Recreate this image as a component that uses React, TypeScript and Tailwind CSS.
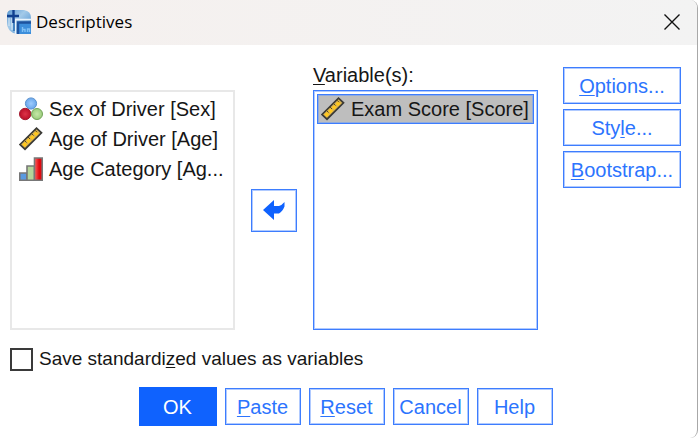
import { useState } from 'react'
import type { ReactNode } from 'react'

function LogoIcon() {
  return (
    <svg viewBox="0 0 24 24" className="size-6 shrink-0" aria-hidden="true">
      <defs>
        <linearGradient id="logo-bg" x1="0" y1="0" x2="1" y2="1">
          <stop offset="0" stopColor="#5a97d0" />
          <stop offset="0.4" stopColor="#a3cae9" />
          <stop offset="1" stopColor="#3f86cc" />
        </linearGradient>
      </defs>
      <path d="M5 0h12q7 1 7 8v16H11Q0 23 0 12V5q0-5 5-5z" fill="url(#logo-bg)" />
      <path d="M8.500 24V9.500H24" stroke="#eaf4fc" strokeWidth="1.500" fill="none" />
      <path d="M5 8v12M2 8v8" stroke="#dcebf7" strokeWidth="1" />
      <path d="M0 6h12M6.500 0v13" stroke="#10408f" strokeWidth="2.400" />
      <path d="M7 13v8" stroke="#2f74b8" strokeWidth="1.600" />
      <path d="M12 24V13h12v11z" fill="#3c8edb" />
      <path d="M11 24V12.500h13" stroke="#1d539f" strokeWidth="2.400" fill="none" />
      <path d="M15.500 17v5M15.500 19.500h2.500V22M20.500 22v-3h2v3" stroke="#7fc0f5" strokeWidth="1.400" fill="none" />
    </svg>
  )
}

function NominalIcon() {
  return (
    <svg viewBox="0 0 24 24" className="size-6 shrink-0" aria-hidden="true">
      <defs>
        <radialGradient id="ball-blue">
          <stop offset="0" stopColor="#9dccff" />
          <stop offset="1" stopColor="#6aa6ea" />
        </radialGradient>
        <radialGradient id="ball-red">
          <stop offset="0" stopColor="#dc3448" />
          <stop offset="1" stopColor="#bb0f28" />
        </radialGradient>
        <radialGradient id="ball-green">
          <stop offset="0" stopColor="#c6e8a8" />
          <stop offset="1" stopColor="#9bcc7c" />
        </radialGradient>
      </defs>
      <circle cx="12" cy="6.500" r="5.600" fill="url(#ball-blue)" stroke="#5a92cf" />
      <circle cx="6.200" cy="17" r="5.700" fill="url(#ball-red)" stroke="#a31a30" />
      <circle cx="18" cy="17" r="5.500" fill="url(#ball-green)" stroke="#74a45a" />
    </svg>
  )
}

function ScaleIcon() {
  return (
    <svg viewBox="0 0 24 24" className="size-6 shrink-0" aria-hidden="true">
      <path d="M1 17.500L17.500 1.200l5 4.600L6 22.200z" fill="#d9b252" stroke="#3a3a36" strokeWidth="1.700" />
      <path d="M4.500 18.800L19.500 4.500" stroke="#ffc81e" strokeWidth="3.400" strokeDasharray="3.600 1.600" />
      <path d="M5.500 13.500l2 2M9 10l2 2M12.500 6.500l2 2M16 3.200l2 2" stroke="#5a4a1c" strokeWidth="1" />
    </svg>
  )
}

function OrdinalIcon() {
  return (
    <svg viewBox="0 0 24 24" className="size-6 shrink-0" aria-hidden="true">
      <defs>
        <linearGradient id="bar-red">
          <stop offset="0" stopColor="#ff6464" />
          <stop offset="0.6" stopColor="#e00a10" />
        </linearGradient>
      </defs>
      <g stroke="#777" strokeWidth="1.600">
        <path d="M.8 16h7.200v7.200H.8z" fill="#5a9ae0" />
        <path d="M8 9h7.500v14.200H8z" fill="#b4d59a" />
        <path d="M15.500 1h7.700v22.200h-7.700z" fill="url(#bar-red)" />
      </g>
    </svg>
  )
}

const sourceVariables = [
  { id: 'sex', label: 'Sex of Driver [Sex]', icon: NominalIcon },
  { id: 'age', label: 'Age of Driver [Age]', icon: ScaleIcon },
  { id: 'agecat', label: 'Age Category [Ag...', icon: OrdinalIcon },
]

const selectedVariables = [{ id: 'score', label: 'Exam Score [Score]', icon: ScaleIcon }]

function Key({ children }: { children: ReactNode }) {
  return <span className="underline decoration-1 underline-offset-2">{children}</span>
}

function DialogButton({ className, children }: { className: string; children: ReactNode }) {
  return (
    <button
      type="button"
      className={`flex items-center justify-center border border-[#3d7dfe] bg-white text-[#2c74fe] inset-ring inset-ring-[#b0caff] ${className}`}
    >
      <span>{children}</span>
    </button>
  )
}

export default function App() {
  const [standardize, setStandardize] = useState(false)

  return (
    <main
      role="dialog"
      aria-labelledby="dialog-title"
      className="flex min-h-screen flex-col overflow-hidden rounded-r-lg border-r border-[#a8a8a8] bg-white font-['Liberation_Sans',Arial,sans-serif] text-[20px] leading-6 text-[#161616]"
    >
      <header className="flex h-[45px] items-center justify-between bg-linear-to-r from-[#f5f0ee] to-[#f3f3f3] pr-4 pb-[2px] pl-[7px]">
        <div className="flex items-center gap-[5px]">
          <LogoIcon />
          <h1 id="dialog-title" className="font-['Open_Sans','Noto_Sans',sans-serif] text-[17px] text-black">
            Descriptives
          </h1>
        </div>
        <button type="button" aria-label="Close">
          <svg viewBox="0 0 18 18" className="size-[18px]" aria-hidden="true">
            <path d="M1.500 1.500l15 15M16.500 1.500l-15 15" stroke="#111" strokeWidth="1.400" />
          </svg>
        </button>
      </header>

      <div className="flex flex-col pt-[18px] pr-4 pl-[10px]">
        <div className="flex">
          <div className="min-w-0 flex-1 pt-[27px]">
            <ul aria-label="Available variables" className="h-60 border-2 border-[#e8e8e8] px-[7px] py-[2px]">
              {sourceVariables.map(({ id, label, icon: Icon }) => (
                <li key={id} className="flex h-[30px] items-center gap-[6px] whitespace-nowrap">
                  <Icon />
                  {label}
                </li>
              ))}
            </ul>
          </div>

          <div className="mx-4 flex items-center pt-[27px]">
            <button
              type="button"
              aria-label="Move variable"
              className="flex h-[43px] w-[46px] items-center justify-center border border-[#3d7dfe] inset-ring inset-ring-[#b0caff]"
            >
              <svg viewBox="0 0 22 20" className="h-5 w-[22px]" aria-hidden="true">
                <path d="M0 10L11 0v6h5q3-1 5.500-4v4.500q-2 5-5.500 7h-5V20z" fill="#0f62fe" />
              </svg>
            </button>
          </div>

          <section className="min-w-0 flex-1">
            <h2 id="variables-label" className="h-[27px]">
              <Key>V</Key>ariable(s):
            </h2>
            <ul
              aria-labelledby="variables-label"
              className="h-60 border border-[#3d7dfe] p-[3px] inset-ring inset-ring-[#b0caff]"
            >
              {selectedVariables.map(({ id, label, icon: Icon }) => (
                <li
                  key={id}
                  className="flex h-[30px] items-center gap-[6px] border border-[#3d7dfe] bg-[#bebebe] px-[3px] whitespace-nowrap inset-ring inset-ring-[#8fabdf]"
                >
                  <Icon />
                  {label}
                </li>
              ))}
            </ul>
          </section>

          <div className="mt-1 ml-[25px] flex w-[118px] flex-col gap-[5px]">
            <DialogButton className="h-[37px]">
              <Key>O</Key>ptions...
            </DialogButton>
            <DialogButton className="h-[37px]">
              Sty<Key>l</Key>e...
            </DialogButton>
            <DialogButton className="h-[37px]">
              <Key>B</Key>ootstrap...
            </DialogButton>
          </div>
        </div>

        <label className="mt-[17px] flex items-center gap-[6px] self-start text-[19px]">
          <input
            type="checkbox"
            checked={standardize}
            onChange={(e) => setStandardize(e.target.checked)}
            className="size-[23px] appearance-none border-2 border-[#3a3a3a] bg-white checked:bg-[#0f62fe]"
          />
          <span>
            Save standardi<Key>z</Key>ed values as variables
          </span>
        </label>

        <footer className="mt-4 flex items-center justify-center gap-2">
          <button type="button" className="h-[39px] w-[78px] bg-[#0f62fe] text-white">
            OK
          </button>
          <DialogButton className="h-[37px] w-[76px]">
            <Key>P</Key>aste
          </DialogButton>
          <DialogButton className="h-[37px] w-[76px]">
            <Key>R</Key>eset
          </DialogButton>
          <DialogButton className="h-[37px] w-[76px]">Cancel</DialogButton>
          <DialogButton className="h-[37px] w-[76px]">Help</DialogButton>
        </footer>
      </div>
    </main>
  )
}
